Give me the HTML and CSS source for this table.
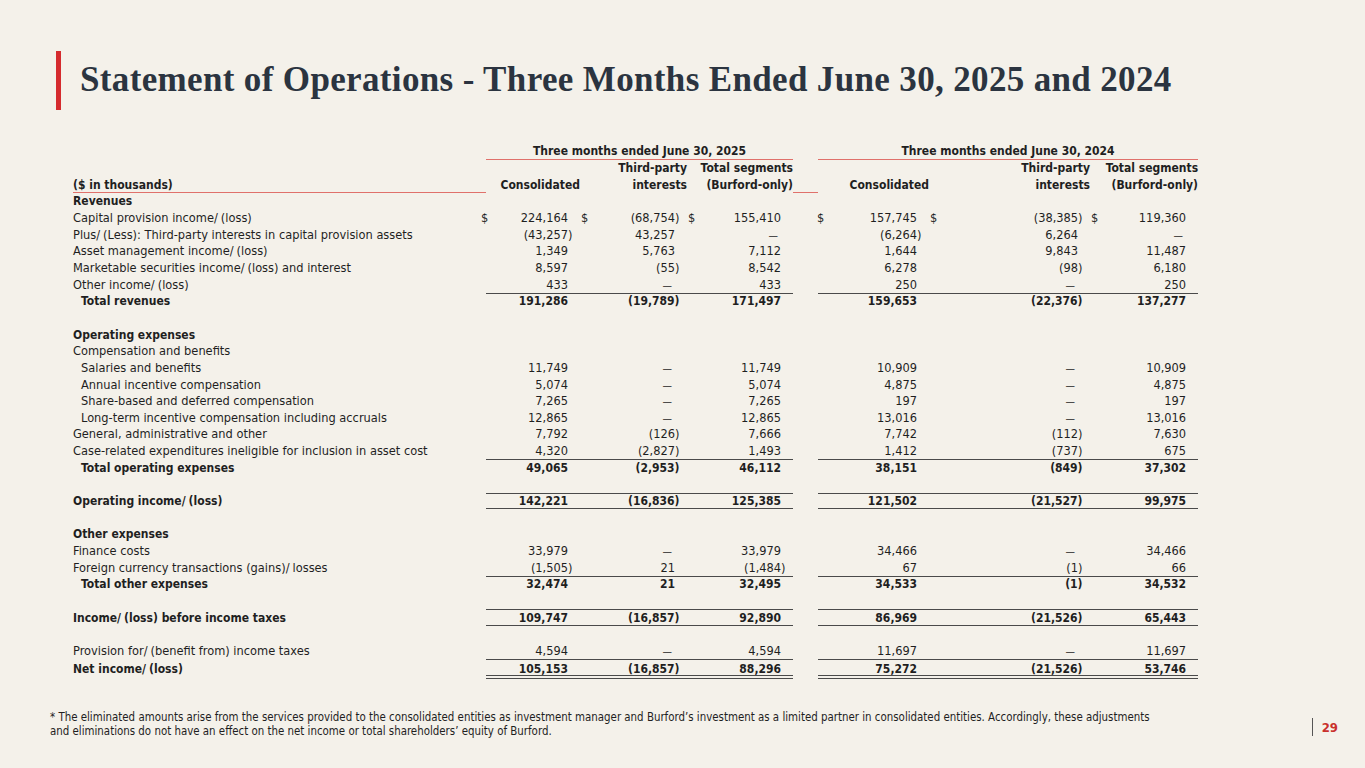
FILE: index.html
```html
<!DOCTYPE html>
<html lang="en">
<head>
<meta charset="utf-8">
<title>Statement of Operations</title>
<link rel="stylesheet" href="styles.css">
</head>
<body>
<div class="slide">
  <header class="head">
    <div class="bar"></div>
    <h1 class="title">Statement of Operations - Three Months Ended June 30, 2025 and 2024</h1>
  </header>

  <table class="fin">
    <colgroup>
      <col class="c-label"><col class="c-v1"><col class="c-v2"><col class="c-v3"><col class="c-gap"><col class="c-v4"><col class="c-v5"><col class="c-v6">
    </colgroup>
    <thead>
      <tr class="h1">
        <th></th>
        <th colspan="3" class="grp">Three months ended June 30, 2025</th>
        <th></th>
        <th colspan="3" class="grp">Three months ended June 30, 2024</th>
      </tr>
      <tr class="h2">
        <th></th>
        <th></th><th class="hr">Third-party</th><th class="hr">Total segments</th>
        <th></th>
        <th></th><th class="hr">Third-party</th><th class="hr">Total segments</th>
      </tr>
      <tr class="h3">
        <th class="lab redline">($ in thousands)</th>
        <th class="hr">Consolidated</th><th class="hr">interests</th><th class="hr">(Burford-only)</th>
        <th class="redline"></th>
        <th class="hr">Consolidated</th><th class="hr">interests</th><th class="hr">(Burford-only)</th>
      </tr>
    </thead>
    <tbody>
      <tr class="b"><td>Revenues</td><td></td><td></td><td></td><td></td><td></td><td></td><td></td></tr>
      <tr><td>Capital provision income<span class="sl">/</span>(loss)</td>
        <td class="n"><span class="d">$</span>224,164</td><td class="n"><span class="d">$</span>(68,754<i>)</i></td><td class="n"><span class="d">$</span>155,410</td><td></td>
        <td class="n"><span class="d">$</span>157,745</td><td class="n"><span class="d">$</span>(38,385<i>)</i></td><td class="n"><span class="d">$</span>119,360</td></tr>
      <tr><td>Plus<span class="sl">/</span>(Less): Third-party interests in capital provision assets</td>
        <td class="n">(43,257<i>)</i></td><td class="n">43,257</td><td class="n z">—</td><td></td>
        <td class="n">(6,264<i>)</i></td><td class="n">6,264</td><td class="n z">—</td></tr>
      <tr><td>Asset management income<span class="sl">/</span>(loss)</td>
        <td class="n">1,349</td><td class="n">5,763</td><td class="n">7,112</td><td></td>
        <td class="n">1,644</td><td class="n">9,843</td><td class="n">11,487</td></tr>
      <tr><td>Marketable securities income<span class="sl">/</span>(loss) and interest</td>
        <td class="n">8,597</td><td class="n">(55<i>)</i></td><td class="n">8,542</td><td></td>
        <td class="n">6,278</td><td class="n">(98<i>)</i></td><td class="n">6,180</td></tr>
      <tr><td>Other income<span class="sl">/</span>(loss)</td>
        <td class="n">433</td><td class="n z">—</td><td class="n">433</td><td></td>
        <td class="n">250</td><td class="n z">—</td><td class="n">250</td></tr>
      <tr class="b top"><td class="in">Total revenues</td>
        <td class="n">191,286</td><td class="n">(19,789<i>)</i></td><td class="n">171,497</td><td></td>
        <td class="n">159,653</td><td class="n">(22,376<i>)</i></td><td class="n">137,277</td></tr>
      <tr class="blank"><td></td><td></td><td></td><td></td><td></td><td></td><td></td><td></td></tr>
      <tr class="b"><td>Operating expenses</td><td></td><td></td><td></td><td></td><td></td><td></td><td></td></tr>
      <tr><td>Compensation and benefits</td><td></td><td></td><td></td><td></td><td></td><td></td><td></td></tr>
      <tr><td class="in">Salaries and benefits</td>
        <td class="n">11,749</td><td class="n z">—</td><td class="n">11,749</td><td></td>
        <td class="n">10,909</td><td class="n z">—</td><td class="n">10,909</td></tr>
      <tr><td class="in">Annual incentive compensation</td>
        <td class="n">5,074</td><td class="n z">—</td><td class="n">5,074</td><td></td>
        <td class="n">4,875</td><td class="n z">—</td><td class="n">4,875</td></tr>
      <tr><td class="in">Share-based and deferred compensation</td>
        <td class="n">7,265</td><td class="n z">—</td><td class="n">7,265</td><td></td>
        <td class="n">197</td><td class="n z">—</td><td class="n">197</td></tr>
      <tr><td class="in">Long-term incentive compensation including accruals</td>
        <td class="n">12,865</td><td class="n z">—</td><td class="n">12,865</td><td></td>
        <td class="n">13,016</td><td class="n z">—</td><td class="n">13,016</td></tr>
      <tr><td>General, administrative and other</td>
        <td class="n">7,792</td><td class="n">(126<i>)</i></td><td class="n">7,666</td><td></td>
        <td class="n">7,742</td><td class="n">(112<i>)</i></td><td class="n">7,630</td></tr>
      <tr><td>Case-related expenditures ineligible for inclusion in asset cost</td>
        <td class="n">4,320</td><td class="n">(2,827<i>)</i></td><td class="n">1,493</td><td></td>
        <td class="n">1,412</td><td class="n">(737<i>)</i></td><td class="n">675</td></tr>
      <tr class="b top"><td class="in">Total operating expenses</td>
        <td class="n">49,065</td><td class="n">(2,953<i>)</i></td><td class="n">46,112</td><td></td>
        <td class="n">38,151</td><td class="n">(849<i>)</i></td><td class="n">37,302</td></tr>
      <tr class="blank"><td></td><td></td><td></td><td></td><td></td><td></td><td></td><td></td></tr>
      <tr class="b top bot"><td>Operating income<span class="sl">/</span>(loss)</td>
        <td class="n">142,221</td><td class="n">(16,836<i>)</i></td><td class="n">125,385</td><td></td>
        <td class="n">121,502</td><td class="n">(21,527<i>)</i></td><td class="n">99,975</td></tr>
      <tr class="blank"><td></td><td></td><td></td><td></td><td></td><td></td><td></td><td></td></tr>
      <tr class="b"><td>Other expenses</td><td></td><td></td><td></td><td></td><td></td><td></td><td></td></tr>
      <tr><td>Finance costs</td>
        <td class="n">33,979</td><td class="n z">—</td><td class="n">33,979</td><td></td>
        <td class="n">34,466</td><td class="n z">—</td><td class="n">34,466</td></tr>
      <tr><td>Foreign currency transactions (gains)<span class="sl">/</span>losses</td>
        <td class="n">(1,505<i>)</i></td><td class="n">21</td><td class="n">(1,484<i>)</i></td><td></td>
        <td class="n">67</td><td class="n">(1<i>)</i></td><td class="n">66</td></tr>
      <tr class="b top"><td class="in">Total other expenses</td>
        <td class="n">32,474</td><td class="n">21</td><td class="n">32,495</td><td></td>
        <td class="n">34,533</td><td class="n">(1<i>)</i></td><td class="n">34,532</td></tr>
      <tr class="blank"><td></td><td></td><td></td><td></td><td></td><td></td><td></td><td></td></tr>
      <tr class="b top bot"><td>Income<span class="sl">/</span>(loss) before income taxes</td>
        <td class="n">109,747</td><td class="n">(16,857<i>)</i></td><td class="n">92,890</td><td></td>
        <td class="n">86,969</td><td class="n">(21,526<i>)</i></td><td class="n">65,443</td></tr>
      <tr class="blank"><td></td><td></td><td></td><td></td><td></td><td></td><td></td><td></td></tr>
      <tr><td>Provision for<span class="sl">/</span>(benefit from) income taxes</td>
        <td class="n">4,594</td><td class="n z">—</td><td class="n">4,594</td><td></td>
        <td class="n">11,697</td><td class="n z">—</td><td class="n">11,697</td></tr>
      <tr class="b top dbl"><td>Net income<span class="sl">/</span>(loss)</td>
        <td class="n">105,153</td><td class="n">(16,857<i>)</i></td><td class="n">88,296</td><td></td>
        <td class="n">75,272</td><td class="n">(21,526<i>)</i></td><td class="n">53,746</td></tr>
    </tbody>
  </table>

  <footer class="foot">
    <p class="note">* The eliminated amounts arise from the services provided to the consolidated entities as investment manager and Burford’s investment as a limited partner in consolidated entities. Accordingly, these adjustments<br>and eliminations do not have an effect on the net income or total shareholders’ equity of Burford.</p>
    <div class="page"><span class="pipe"></span><span class="pnum">29</span></div>
  </footer>
</div>
</body>
</html>
```

FILE: styles.css
```css
* { box-sizing: border-box; }
html, body { margin: 0; padding: 0; }
body {
  background: #f4f1ea;
  width: 1365px;
  height: 768px;
  overflow: hidden;
  font-family: "DejaVu Sans Condensed", "DejaVu Sans", sans-serif;
  color: #1f1f1f;
}
.slide {
  width: 1365px;
  height: 768px;
  display: flex;
  flex-direction: column;
}
.head {
  display: flex;
  align-items: center;
  padding: 51px 0 0 56px;
  height: 110px;
}
.bar {
  width: 5px;
  height: 59px;
  background: #d52b2e;
  flex: none;
}
.title {
  margin: -2px 0 0 19px;
  font-family: "Liberation Serif", "DejaVu Serif", serif;
  font-weight: bold;
  font-size: 35px;
  color: #2b3440;
  letter-spacing: 0.35px;
  white-space: nowrap;
}

.fin {
  margin: 33px 0 0 73px;
  border-collapse: collapse;
  table-layout: fixed;
  width: 1125px;
  font-size: 12.7px;
}
.c-label { width: 413px; }
.c-v1 { width: 94px; }
.c-v2 { width: 107px; }
.c-v3 { width: 106px; }
.c-gap { width: 25px; }
.c-v4 { width: 111px; }
.c-v5 { width: 161px; }
.c-v6 { width: 108px; }

.fin th, .fin td {
  padding: 0;
  height: 16.67px;
  line-height: 16px;
  white-space: nowrap;
  vertical-align: middle;
}
.fin th { font-weight: bold; font-size: 12px; }
.fin .lab { text-align: left; }
.fin .hr { text-align: right; }
.fin .grp {
  text-align: center;
  box-shadow: inset 0 -1px 0 #e0716b;
}
.fin .redline { box-shadow: inset 0 -1px 0 #e0716b; }

.fin td.n {
  text-align: right;
  padding-right: 12px;
}
.fin td.n i { font-style: normal; margin-right: -4.5px; }
.fin td.z { padding-right: 15px; font-size: 10.5px; }
.fin .d { float: left; padding-left: 1px; }
.fin td:nth-child(2) .d { margin-left: -6px; }
.fin td:nth-child(6) .d { margin-left: -2px; }
.fin .sl { margin-right: 3px; }
.fin .in { padding-left: 8px; }
.fin tr.b td { font-weight: bold; font-size: 12px; }

.fin tr.top td:nth-child(n+2):not(:nth-child(5)) {
  box-shadow: inset 0 1px 0 #4a4a4a;
}
.fin tr.top.bot td:nth-child(n+2):not(:nth-child(5)) {
  box-shadow: inset 0 1px 0 #4a4a4a, inset 0 -1px 0 #4a4a4a;
}
.fin tr.top.dbl td:nth-child(n+2):not(:nth-child(5)) {
  box-shadow: inset 0 1px 0 #4a4a4a, inset 0 -1px 0 #4a4a4a, inset 0 -3px 0 #f4f1ea, inset 0 -4px 0 #4a4a4a;
}
.fin tr.dbl td {
  height: 20px;
  padding-top: 2px;
  vertical-align: top;
}
.fin tr.dbl td.n { padding-top: 2px; }

.foot {
  margin-top: auto;
  display: flex;
  align-items: flex-end;
  justify-content: space-between;
  padding: 0 27px 30px 50px;
}
.note {
  margin: 0;
  font-size: 11.4px;
  line-height: 14px;
  color: #1f1f1f;
}
.page {
  display: flex;
  align-items: center;
  gap: 9px;
  margin-bottom: 2px;
}
.pipe {
  width: 1px;
  height: 18px;
  background: #555;
}
.pnum {
  font-size: 13px;
  font-weight: bold;
  color: #c9302c;
}
```
